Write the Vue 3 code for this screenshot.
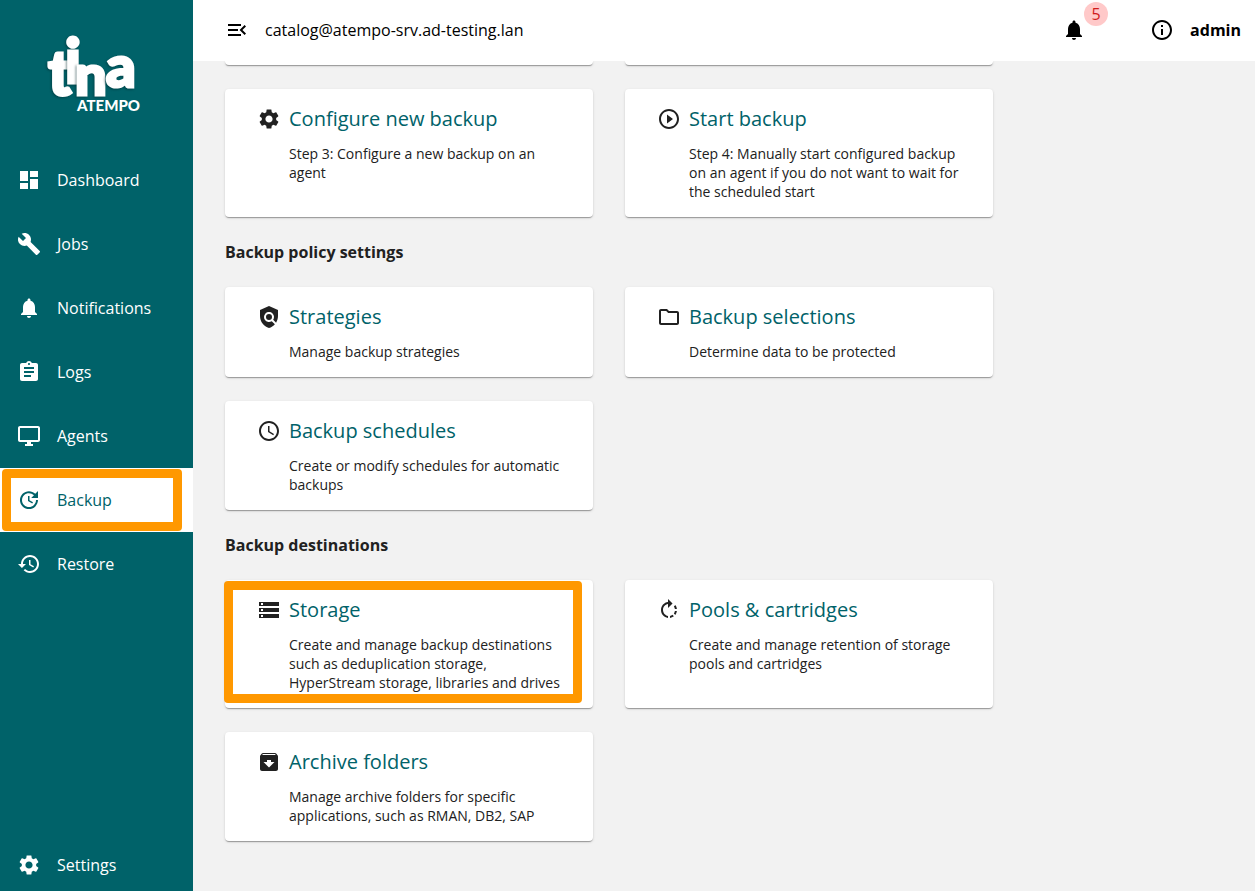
<script setup>
const icons = {
  dashboard: 'M3 13h8V3H3v10zm0 8h8v-6H3v6zm10 0h8V11h-8v10zm0-18v6h8V3h-8z',
  build: 'M22.7 19l-9.1-9.1c.9-2.3.4-5-1.5-6.9-2-2-5-2.4-7.4-1.3L9 6 6 9 1.6 4.7C.4 7.1.9 10.1 2.9 12.1c1.9 1.9 4.6 2.4 6.9 1.5l9.1 9.1c.4.4 1 .4 1.4 0l2.3-2.3c.5-.4.5-1.1.1-1.4z',
  bell: 'M12 22c1.1 0 2-.9 2-2h-4c0 1.1.89 2 2 2zm6-6v-5c0-3.07-1.64-5.64-4.5-6.32V4c0-.83-.67-1.5-1.5-1.5s-1.5.67-1.5 1.5v.68C7.63 5.36 6 7.92 6 11v5l-2 2v1h16v-1l-2-2z',
  assignment: 'M19 3h-4.18C14.4 1.84 13.3 1 12 1c-1.3 0-2.4.84-2.82 2H5c-1.1 0-2 .9-2 2v14c0 1.1.9 2 2 2h14c1.1 0 2-.9 2-2V5c0-1.1-.9-2-2-2zm-7 0c.55 0 1 .45 1 1s-.45 1-1 1-1-.45-1-1 .45-1 1-1zm2 14H7v-2h7v2zm3-4H7v-2h10v2zm0-4H7V7h10v2z',
  desktop: 'M21 2H3c-1.1 0-2 .9-2 2v12c0 1.1.9 2 2 2h7v2H8v2h8v-2h-2v-2h7c1.1 0 2-.9 2-2V4c0-1.1-.9-2-2-2zm0 14H3V4h18v12z',
  update: 'M21 10.12h-6.78l2.74-2.82c-2.73-2.7-7.15-2.8-9.88-.1-2.73 2.71-2.73 7.08 0 9.79s7.15 2.71 9.88 0C18.32 15.65 19 14.08 19 12.1h2c0 1.98-.88 4.55-2.64 6.29-3.51 3.48-9.21 3.48-12.72 0-3.5-3.47-3.53-9.11-.02-12.58s9.14-3.47 12.65 0L21 3v7.12zM12.5 8v4.25l3.5 2.08-.72 1.21L11 13V8h1.5z',
  history: 'M13 3c-4.97 0-9 4.03-9 9H1l3.89 3.89.07.14L9 12H6c0-3.87 3.13-7 7-7s7 3.13 7 7-3.13 7-7 7c-1.93 0-3.68-.79-4.94-2.06l-1.42 1.42C8.27 19.99 10.51 21 13 21c4.97 0 9-4.03 9-9s-4.03-9-9-9zm-1 5v5l4.28 2.54.72-1.21-3.5-2.08V8H12z',
  settings: 'M19.14 12.94c.04-.3.06-.61.06-.94 0-.32-.02-.64-.07-.94l2.03-1.58c.18-.14.23-.41.12-.61l-1.92-3.32c-.12-.22-.37-.29-.59-.22l-2.39.96c-.5-.38-1.03-.7-1.62-.94l-.36-2.54c-.04-.24-.24-.41-.48-.41h-3.84c-.24 0-.43.17-.47.41l-.36 2.54c-.59.24-1.13.57-1.62.94l-2.39-.96c-.22-.08-.47 0-.59.22L2.74 8.87c-.12.21-.08.47.12.61l2.03 1.58c-.05.3-.09.63-.09.94s.02.64.07.94l-2.03 1.58c-.18.14-.23.41-.12.61l1.92 3.32c.12.22.37.29.59.22l2.39-.96c.5.38 1.03.7 1.62.94l.36 2.54c.05.24.24.41.48.41h3.84c.24 0 .44-.17.47-.41l.36-2.54c.59-.24 1.13-.56 1.62-.94l2.39.96c.22.08.47 0 .59-.22l1.92-3.32c.12-.22.07-.47-.12-.61l-2.01-1.58zM12 15.6c-1.98 0-3.6-1.62-3.6-3.6s1.62-3.6 3.6-3.6 3.6 1.62 3.6 3.6-1.62 3.6-3.6 3.6z',
  menuOpen: 'M3 18h13v-2H3v2zm0-5h10v-2H3v2zm0-7v2h13V6H3zm18 9.59L17.42 12 21 8.41 19.59 7l-5 5 5 5L21 15.59z',
  info: 'M11 17h2v-6h-2v6zm1-15C6.48 2 2 6.48 2 12s4.48 10 10 10 10-4.48 10-10S17.52 2 12 2zm0 18c-4.41 0-8-3.59-8-8s3.59-8 8-8 8 3.59 8 8-3.59 8-8 8zM11 9h2V7h-2v2z',
  play: 'M10 16.5l6-4.5-6-4.5v9zM12 2C6.48 2 2 6.48 2 12s4.48 10 10 10 10-4.48 10-10S17.52 2 12 2zm0 18c-4.41 0-8-3.59-8-8s3.59-8 8-8 8 3.59 8 8-3.59 8-8 8z',
  policy: 'M21 5l-9-4-9 4v6c0 5.55 3.84 10.74 9 12 2.3-.56 4.33-1.9 5.88-3.71l-3.12-3.12c-1.94 1.29-4.58 1.07-6.29-.64-1.95-1.95-1.95-5.12 0-7.07 1.95-1.95 5.12-1.95 7.07 0 1.71 1.71 1.92 4.35.64 6.29l2.9 2.9C20.29 15.69 21 13.38 21 11V5zM12 9a3 3 0 1 0 0 6a3 3 0 1 0 0-6z',
  folder: 'M9.17 6l2 2H20v10H4V6h5.17M10 4H4c-1.1 0-1.99.9-1.99 2L2 18c0 1.1.9 2 2 2h16c1.1 0 2-.9 2-2V8c0-1.1-.9-2-2-2h-8l-2-2z',
  schedule: 'M11.99 2C6.47 2 2 6.48 2 12s4.47 10 9.99 10C17.52 22 22 17.52 22 12S17.52 2 11.99 2zM12 20c-4.42 0-8-3.58-8-8s3.58-8 8-8 8 3.58 8 8-3.58 8-8 8zm.5-13H11v6l5.25 3.15.75-1.23-4.5-2.67z',
  storage: 'M2 20h20v-4H2v4zm2-3h2v2H4v-2zM2 4v4h20V4H2zm4 3H4V5h2v2zm-4 7h20v-4H2v4zm2-3h2v2H4v-2z',
  rotate: 'M15.55 5.55L11 1v3.07C7.06 4.56 4 7.92 4 12s3.05 7.44 7 7.93v-2.02c-2.84-.48-5-2.94-5-5.91s2.16-5.43 5-5.91V10l4.55-4.45zM19.93 11c-.17-1.39-.72-2.73-1.62-3.89l-1.42 1.42c.54.75.88 1.6 1.02 2.47h2.02zM13 17.9v2.02c1.39-.17 2.74-.71 3.9-1.61l-1.44-1.44c-.75.54-1.59.89-2.46 1.03zm3.89-2.42l1.42 1.41c.9-1.16 1.45-2.5 1.62-3.89h-2.02c-.14.87-.48 1.72-1.02 2.48z',
  archive: 'M20.54 5.23l-1.39-1.68C18.88 3.21 18.47 3 18 3H6c-.47 0-.88.21-1.16.55L3.46 5.23C3.17 5.57 3 6.02 3 6.5V19c0 1.1.9 2 2 2h14c1.1 0 2-.9 2-2V6.5c0-.48-.17-.93-.46-1.27zM12 17.5L6.5 12H10v-2h4v2h3.5L12 17.5zM5.12 5l.81-1h12l.94 1H5.12z'
}

const nav = [
  { label: 'Dashboard', icon: 'dashboard' },
  { label: 'Jobs', icon: 'build' },
  { label: 'Notifications', icon: 'bell' },
  { label: 'Logs', icon: 'assignment' },
  { label: 'Agents', icon: 'desktop' },
  { label: 'Backup', icon: 'update', active: true },
  { label: 'Restore', icon: 'history' }
]

const sections = [
  {
    cards: [
      { title: 'Configure new backup', icon: 'settings', text: 'Step 3: Configure a new backup on an agent' },
      { title: 'Start backup', icon: 'play', text: 'Step 4: Manually start configured backup on an agent if you do not want to wait for the scheduled start' }
    ]
  },
  {
    heading: 'Backup policy settings',
    cards: [
      { title: 'Strategies', icon: 'policy', text: 'Manage backup strategies' },
      { title: 'Backup selections', icon: 'folder', text: 'Determine data to be protected' },
      { title: 'Backup schedules', icon: 'schedule', text: 'Create or modify schedules for automatic backups' }
    ]
  },
  {
    heading: 'Backup destinations',
    cards: [
      { title: 'Storage', icon: 'storage', text: 'Create and manage backup destinations such as deduplication storage, HyperStream storage, libraries and drives', marked: true },
      { title: 'Pools & cartridges', icon: 'rotate', text: 'Create and manage retention of storage pools and cartridges' },
      { title: 'Archive folders', icon: 'archive', text: 'Manage archive folders for specific applications, such as RMAN, DB2, SAP' }
    ]
  }
]
</script>

<template>
  <div class="app">
    <aside class="sidebar">
      <a class="logo" href="#" aria-label="Tina Atempo">
        <svg width="100" height="84" viewBox="0 0 100 84">
          <g class="mark">
            <text x="5" y="63" font-size="62">t</text>
            <text x="22" y="51" font-size="61">i</text>
            <text x="32" y="63" font-size="56">n</text>
            <text x="63" y="55" font-size="58">a</text>
          </g>
          <text class="brand" x="34" y="79" font-size="15">ATEMPO</text>
        </svg>
      </a>
      <nav class="nav">
        <a v-for="item in nav" :key="item.label" href="#" class="nav-item" :class="{ active: item.active }">
          <svg class="icon" viewBox="0 0 24 24"><path :d="icons[item.icon]" /></svg>
          <span>{{ item.label }}</span>
          <i v-if="item.active" class="marker nav-marker"></i>
        </a>
      </nav>
      <a href="#" class="nav-item bottom">
        <svg class="icon" viewBox="0 0 24 24"><path :d="icons.settings" /></svg>
        <span>Settings</span>
      </a>
    </aside>

    <div class="page">
      <header class="topbar">
        <button class="icon-button" aria-label="Collapse menu">
          <svg class="icon" viewBox="0 0 24 24"><path :d="icons.menuOpen" /></svg>
        </button>
        <span class="host">catalog@atempo-srv.ad-testing.lan</span>
        <button class="icon-button alerts" aria-label="Alerts">
          <svg class="icon" viewBox="0 0 24 24"><path :d="icons.bell" /></svg>
          <span class="badge">5</span>
        </button>
        <button class="icon-button info" aria-label="Information">
          <svg class="icon" viewBox="0 0 24 24"><path :d="icons.info" /></svg>
        </button>
        <button class="user">admin</button>
      </header>

      <main class="content">
        <div class="cards previous">
          <div class="card-end"></div>
          <div class="card-end"></div>
        </div>
        <section v-for="(section, i) in sections" :key="i">
          <h2 v-if="section.heading" class="heading">{{ section.heading }}</h2>
          <div class="cards">
            <a v-for="card in section.cards" :key="card.title" href="#" class="card">
              <svg class="icon" viewBox="0 0 24 24"><path :d="icons[card.icon]" /></svg>
              <div class="card-body">
                <h3 class="card-title">{{ card.title }}</h3>
                <p class="card-text">{{ card.text }}</p>
              </div>
              <i v-if="card.marked" class="marker card-marker"></i>
            </a>
          </div>
        </section>
      </main>
    </div>
  </div>
</template>

<style>
body {
  margin: 0;
}
</style>

<style scoped>
* {
  box-sizing: border-box;
}
.app {
  display: flex;
  height: 100vh;
  overflow: hidden;
  background: #f2f2f2;
  font-family: "Open Sans", "Noto Sans", sans-serif;
  font-size: 16px;
  color: #212121;
}
a {
  color: inherit;
  text-decoration: none;
}
button {
  padding: 0;
  border: 0;
  background: none;
  font: inherit;
  color: inherit;
}
.icon {
  display: block;
  flex: none;
  width: 24px;
  height: 24px;
  fill: currentColor;
}
.sidebar {
  display: flex;
  flex-direction: column;
  flex: none;
  width: 193px;
  background: #006269;
  color: #fff;
}
.logo {
  flex: none;
  height: 148px;
  padding: 32px 0 0 43px;
}
.logo svg {
  display: block;
  overflow: visible;
  fill: #fff;
  font-family: Lato, sans-serif;
  font-weight: 900;
}
.mark text {
  stroke: #fff;
  stroke-width: 3px;
  filter: drop-shadow(-1px 1px 1px rgba(0, 40, 44, 0.5));
}
.nav-item {
  position: relative;
  display: flex;
  align-items: center;
  gap: 16px;
  height: 64px;
  padding-left: 17px;
}
.nav-item.active {
  background: #fff;
  color: #006269;
}
.nav-item.bottom {
  height: 52px;
  margin-top: auto;
}
.marker {
  position: absolute;
  border: 9px solid #ff9800;
  border-radius: 4px;
  pointer-events: none;
}
.nav-marker {
  inset: 1px 11px 1px 2px;
}
.card-marker {
  inset: 1px 11px 5px -1px;
}
.page {
  display: flex;
  flex: 1;
  flex-direction: column;
  min-width: 0;
}
.topbar {
  display: flex;
  flex: none;
  align-items: center;
  height: 61px;
  padding: 0 14px 1px 32px;
  background: #fff;
  color: #000;
}
.host {
  margin-left: 16px;
}
.alerts {
  position: relative;
  margin-left: auto;
}
.badge {
  position: absolute;
  top: -16px;
  left: 22px;
  width: 24px;
  height: 24px;
  border-radius: 50%;
  background: #ffc9c9;
  color: #d01c1c;
  line-height: 24px;
  text-align: center;
}
.info {
  margin: 0 16px 0 64px;
}
.user {
  font-weight: 700;
}
.content {
  flex: 1;
  min-height: 0;
  padding: 0 32px;
  overflow: hidden;
}
.cards {
  display: grid;
  grid-template-columns: repeat(2, minmax(0, 368px));
  gap: 24px 32px;
}
.previous {
  margin-bottom: 24px;
}
.card,
.card-end {
  border-radius: 4px;
  background: #fff;
  box-shadow: 0 2px 1px -1px rgba(0, 0, 0, 0.2), 0 1px 1px 0 rgba(0, 0, 0, 0.14), 0 1px 3px 0 rgba(0, 0, 0, 0.12);
}
.card-end {
  height: 4px;
  border-radius: 0 0 4px 4px;
}
.card {
  position: relative;
  display: flex;
  gap: 8px;
  padding: 16px 32px;
}
.card .icon {
  margin-top: 2px;
}
.card-body {
  flex: 1;
  min-width: 0;
}
.card-title {
  margin: 0 0 11px;
  color: #006269;
  font-size: 20px;
  font-weight: 400;
  line-height: 28px;
}
.card-text {
  margin: 0;
  font-size: 14px;
  line-height: 19px;
}
.heading {
  margin: 24px 0;
  font-size: 16px;
  font-weight: 700;
  line-height: 22px;
}
</style>
